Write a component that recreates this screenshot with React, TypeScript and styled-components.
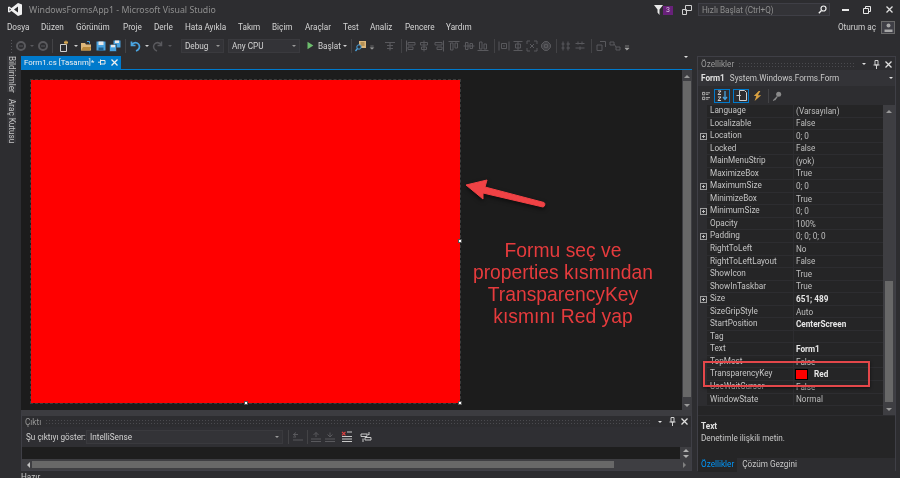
import React from "react";
import styled, { createGlobalStyle } from "styled-components";

const Global = createGlobalStyle`
  html, body { margin: 0; padding: 0; background: #2d2d30; overflow: hidden; }
  #root { width: 900px; height: 478px; }
  * { box-sizing: border-box; }
`;

const Root = styled.div`
  position: relative;
  width: 900px;
  height: 478px;
  overflow: hidden;
  display: flex;
  flex-direction: column;
  background: #2d2d30;
  color: #d0d0d0;
  font-family: Roboto, "Noto Sans", sans-serif;
  font-size: 8.2px;
  filter: blur(0.35px);
  & > * { flex-shrink: 0; }
`;

/* ---------- title bar ---------- */
const TitleBar = styled.div`
  height: 19px;
  display: flex;
  align-items: center;
  padding-left: 8px;
`;
const TitleText = styled.span`
  margin-left: 7px;
  color: #8f8f8f;
  font-family: "Noto Sans", sans-serif;
  font-size: 8.8px;
  flex: 1;
`;
const TitleIconSlot = styled.span<{ $w: number }>`
  width: ${(p) => p.$w}px;
  height: 16px;
  display: flex;
  align-items: center;
  justify-content: center;
  flex: none;
`;
const Badge = styled.span`
  width: 10px;
  height: 9px;
  margin-top: 2px;
  margin-right: 9px;
  background: #68217a;
  color: #d8c8e0;
  font-size: 7px;
  line-height: 9px;
  text-align: center;
  flex: none;
`;
const SearchBox = styled.div`
  width: 132px;
  height: 13px;
  margin-left: 6px;
  margin-right: 4px;
  border: 1px solid #3f3f46;
  background: #333337;
  display: flex;
  align-items: center;
  justify-content: space-between;
  padding: 0 2px 0 3px;
  color: #8f8f8f;
  font-size: 8.2px;
`;

/* ---------- menu ---------- */
const MenuBar = styled.div`
  height: 16px;
  display: flex;
  align-items: center;
  padding-left: 7px;
`;
const MenuItem = styled.span<{ $w: number }>`
  width: ${(p) => p.$w}px;
  flex: none;
  color: #d4d4d4;
  white-space: nowrap;
`;
const Account = styled.div`
  margin-left: auto;
  margin-right: 5px;
  display: flex;
  align-items: center;
  gap: 5px;
  color: #d0d0d0;
`;
const Avatar = styled.span`
  width: 14px;
  height: 13px;
  border: 1px solid #6a6a6a;
  background: #3f3f46;
  display: flex;
  align-items: center;
  justify-content: center;
`;

/* ---------- toolbar ---------- */
const ToolBar = styled.div`
  height: 21px;
  display: flex;
  align-items: center;
  padding-left: 8px;
`;
const Slot = styled.span<{ $w: number }>`
  width: ${(p) => p.$w}px;
  flex: none;
  display: flex;
  align-items: center;
  justify-content: center;
`;
const SlotEnd = styled(Slot)`
  margin-left: auto;
`;
const Sep = styled.i`
  width: 1px;
  height: 14px;
  background: #434346;
  display: block;
`;
const Grip = styled.i`
  width: 3px;
  height: 14px;
  background-image: radial-gradient(#55555a 0.6px, transparent 0.7px);
  background-size: 3px 3px;
  display: block;
`;
const Caret = styled.i<{ $c?: string }>`
  display: block;
  width: 0;
  height: 0;
  border-left: 2.5px solid transparent;
  border-right: 2.5px solid transparent;
  border-top: 2.5px solid ${(p) => p.$c || "#d0d0d0"};
`;
const Combo = styled.div<{ $w: number }>`
  width: ${(p) => p.$w}px;
  height: 14px;
  flex: none;
  background: #333337;
  border: 1px solid #3a3a3e;
  display: flex;
  align-items: center;
  justify-content: space-between;
  padding: 0 3px;
  color: #d4d4d4;
`;
const Label = styled.span<{ $w: number }>`
  width: ${(p) => p.$w}px;
  flex: none;
  color: #d4d4d4;
  padding-left: 3px;
  white-space: nowrap;
`;

/* ---------- main ---------- */
const Main = styled.div`
  height: 415px;
  display: flex;
`;
const SideStrip = styled.div`
  width: 21px;
  flex: none;
  padding-left: 7px;
  display: flex;
  flex-direction: column;
  gap: 7px;
`;
const SideTab = styled.div<{ $h: number }>`
  width: 9px;
  height: ${(p) => p.$h}px;
  background: #37373b;
  writing-mode: vertical-rl;
  color: #c4c4c4;
  font-size: 8.2px;
  line-height: 9px;
  white-space: nowrap;
`;
const Center = styled.div`
  width: 671px;
  flex: none;
  display: flex;
  flex-direction: column;
`;
const DocTabs = styled.div`
  height: 14px;
  border-bottom: 1px solid #007acc;
  display: flex;
  align-items: flex-start;
  justify-content: space-between;
  padding-right: 2px;
`;
const DocTab = styled.div`
  width: 100px;
  height: 13px;
  background: #007acc;
  color: #f0f0f0;
  display: flex;
  align-items: center;
  padding-left: 3px;
  white-space: nowrap;
`;
const DocTitle = styled.span`
  width: 74px;
  flex: none;
  font-size: 7.8px;
`;
const Designer = styled.div`
  height: 340px;
  display: flex;
`;
const Surface = styled.div`
  flex: 1;
  background: #1c1c1c;
  padding: 10px 0 0 10px;
`;
const FormRect = styled.div`
  position: relative;
  width: 429px;
  height: 323px;
  background: #ff0000;
  outline: 1px dashed #3c3c3c;
`;
const Handle = styled.i<{ $x: number; $y: number }>`
  position: absolute;
  left: ${(p) => p.$x}px;
  top: ${(p) => p.$y}px;
  width: 4px;
  height: 4px;
  background: #fff;
  border: 1px solid #555;
  display: block;
`;
const VScroll = styled.div`
  width: 10px;
  flex: none;
  background: #3e3e42;
  display: flex;
  flex-direction: column;
  align-items: center;
  padding: 5px 0 3px;
`;
const ArrowUp = styled.i<{ $c?: string }>`
  display: block;
  flex: none;
  width: 0;
  height: 0;
  border-left: 3px solid transparent;
  border-right: 3px solid transparent;
  border-bottom: 3px solid ${(p) => p.$c || "#999"};
`;
const ArrowDown = styled.i<{ $c?: string }>`
  display: block;
  flex: none;
  width: 0;
  height: 0;
  border-left: 3px solid transparent;
  border-right: 3px solid transparent;
  border-top: 3px solid ${(p) => p.$c || "#999"};
`;
const VThumb = styled.div<{ $top: number; $h: number }>`
  width: 8px;
  height: ${(p) => p.$h}px;
  margin-top: ${(p) => p.$top}px;
  margin-bottom: auto;
  background: #686868;
`;
const Output = styled.div`
  height: 61px;
  background: #2d2d30;
  border-top: 6px solid #3c3c40;
  border-right: 1px solid #3f3f46;
  border-left: 1px solid #3f3f46;
  border-bottom: 1px solid #3f3f46;
  display: flex;
  flex-direction: column;
`;
const PanelHead = styled.div`
  height: 11px;
  flex: none;
  display: flex;
  align-items: center;
  padding: 0 3px;
  color: #9a9a9a;
  gap: 4px;
  font-size: 8.2px;
`;
const PropsHead = styled(PanelHead)`
  height: 13px;
  padding-top: 1px;
`;
const Dots = styled.i`
  flex: 1;
  height: 5px;
  display: block;
  background-image: radial-gradient(#4a4a4e 0.6px, transparent 0.7px);
  background-size: 3px 3px;
`;
const OutTools = styled.div`
  height: 20px;
  flex: none;
  display: flex;
  align-items: center;
  padding-left: 4px;
  background: #2f2f33;
`;
const OutLabel = styled.span`
  width: 60px;
  flex: none;
  color: #d0d0d0;
  white-space: nowrap;
`;
const OutText = styled.div`
  height: 12px;
  flex: none;
  display: flex;
`;
const OutBody = styled.div`
  flex: 1;
  background: #1e1e1e;
`;
const OutSideBtns = styled.div`
  width: 11px;
  flex: none;
  background: #3e3e42;
  display: flex;
  flex-direction: column;
  align-items: center;
  justify-content: center;
  gap: 3px;
`;
const HScroll = styled.div`
  flex: 1;
  background: #3e3e42;
  display: flex;
  align-items: center;
  padding: 0 5px;
`;
const ArrowLeft = styled.i<{ $c: string }>`
  display: block;
  width: 0;
  height: 0;
  border-top: 3px solid transparent;
  border-bottom: 3px solid transparent;
  border-right: 3px solid ${(p) => p.$c};
  flex: none;
`;
const ArrowRight = styled.i<{ $c: string }>`
  display: block;
  width: 0;
  height: 0;
  border-top: 3px solid transparent;
  border-bottom: 3px solid transparent;
  border-left: 3px solid ${(p) => p.$c};
  flex: none;
`;
const HThumb = styled.div`
  width: 582px;
  height: 7px;
  margin-left: 2px;
  margin-right: auto;
  background: #686868;
  flex: none;
`;

/* ---------- properties ---------- */
const Props = styled.div`
  width: 199px;
  flex: none;
  margin-left: 5px;
  border: 1px solid #3f3f46;
  border-bottom: none;
  display: flex;
  flex-direction: column;
`;
const ObjectLine = styled.div`
  height: 16px;
  flex: none;
  display: flex;
  align-items: center;
  padding: 0 2px 0 3px;
  background: #333337;
  gap: 5px;
  color: #c8c8c8;
  white-space: nowrap;
`;
const Strong = styled.b`
  font-weight: 700;
  color: #e0e0e0;
`;
const PropTools = styled.div`
  height: 19px;
  flex: none;
  display: flex;
  align-items: center;
  padding-left: 3px;
`;
const ToolBtn = styled.span<{ $w: number; $on?: boolean }>`
  width: ${(p) => p.$w}px;
  height: 14px;
  flex: none;
  display: flex;
  align-items: center;
  justify-content: center;
  border: 1px solid ${(p) => (p.$on ? "#007acc" : "transparent")};
  margin-right: 3px;
`;
const GridArea = styled.div`
  height: 310px;
  flex: none;
  display: flex;
  background: #252526;
`;
const Rows = styled.div`
  flex: 1;
`;
const Row = styled.div`
  height: 12.55px;
  display: grid;
  grid-template-columns: 9px 87px 1fr;
  align-items: center;
  border-bottom: 1px solid #2d2d30;
  white-space: nowrap;
  line-height: 11px;
`;
const Gutter = styled.span`
  height: 12.5px;
  background: #2d2d30;
  display: flex;
  align-items: center;
  justify-content: center;
  padding-left: 2px;
`;
const Expander = styled.i`
  display: block;
  position: relative;
  width: 7px;
  height: 7px;
  border: 1px solid #a0a0a0;
  &::before {
    content: "";
    position: absolute;
    left: 1px;
    top: 2px;
    width: 3px;
    height: 1px;
    background: #c0c0c0;
  }
  &::after {
    content: "";
    position: absolute;
    left: 2px;
    top: 1px;
    width: 1px;
    height: 3px;
    background: #c0c0c0;
  }
`;
const PropName = styled.span`
  padding-left: 3px;
  color: #c4c4c4;
  height: 12.5px;
  border-right: 1px solid #2d2d30;
`;
const PropValue = styled.span<{ $b?: boolean }>`
  padding-left: 2px;
  color: ${(p) => (p.$b ? "#e6e6e6" : "#bdbdbd")};
  font-weight: ${(p) => (p.$b ? 700 : 400)};
  display: flex;
  align-items: center;
  gap: 6px;
  height: 12.5px;
`;
const Swatch = styled.i`
  width: 13px;
  height: 11px;
  background: #ff0000;
  border: 1px solid #000;
  display: block;
  flex: none;
  margin-left: -1px;
`;
const GridScroll = styled.div`
  width: 12px;
  flex: none;
  background: #3e3e42;
  display: flex;
  flex-direction: column;
  align-items: center;
  padding: 5px 0 4px;
`;
const Desc = styled.div`
  height: 42px;
  flex: none;
  margin-top: 1px;
  background: #252526;
  padding: 4px 3px 0;
  line-height: 12px;
  color: #c8c8c8;
`;
const TabRow = styled.div`
  height: 14px;
  flex: none;
  display: flex;
  align-items: center;
`;
const BottomTab = styled.span<{ $on?: boolean }>`
  height: 14px;
  line-height: 13px;
  padding: 0 3px;
  margin-right: ${(p) => (p.$on ? "2px" : 0)};
  background: ${(p) => (p.$on ? "#252526" : "transparent")};
  color: ${(p) => (p.$on ? "#0097fb" : "#c8c8c8")};
  white-space: nowrap;
`;
const StatusBar = styled.div`
  height: 7px;
  overflow: hidden;
  line-height: 12px;
  padding-left: 21px;
  color: #c8c8c8;
`;

/* ---------- annotations lying over the screenshot ---------- */
const Note = styled.div`
  position: absolute;
  left: 463px;
  top: 240px;
  width: 200px;
  text-align: center;
  font-family: "Liberation Sans", Arial, sans-serif;
  font-size: 19.3px;
  line-height: 21.9px;
  color: #e63b3d;
`;
const ArrowArt = styled.svg`
  position: absolute;
  left: 460px;
  top: 175px;
  filter: drop-shadow(0 2px 2px rgba(0, 0, 0, 0.55));
`;
const Highlight = styled.div`
  position: absolute;
  left: 703px;
  top: 361px;
  width: 167px;
  height: 26px;
  border: 2px solid #e4474a;
  box-shadow: 0 1px 3px rgba(0, 0, 0, 0.6);
`;

/* ---------- icons ---------- */
type IconName =
  | "circleL" | "circleR" | "newp" | "open" | "save" | "saveall" | "undo" | "redo" | "play" | "find" | "over"
  | "tab" | "aL" | "aC" | "aR" | "aT" | "aM" | "aB" | "wEq" | "hEq" | "bEq" | "cen" | "hs" | "vs" | "front" | "back"
  | "o1" | "o2" | "o3" | "o4" | "o5";

const D = "#59595d";
const ICONS: Record<IconName, React.ReactNode> = {
  circleL: <><circle cx="6" cy="6" r="4" fill="none" stroke={D} strokeWidth="2" /><path d="M4 6h4" stroke={D} /></>,
  circleR: <><circle cx="6" cy="6" r="4" fill="none" stroke={D} strokeWidth="2" /><path d="M4 6h4" stroke={D} /></>,
  newp: <><path d="M2.500 4.500h6v7h-6z" fill="none" stroke="#d0d0d0" /><path d="M8 .5v4M6 2.500h4M6.500 1l3 3M9.500 1l-3 3" stroke="#d8a850" /></>,
  open: <><path d="M1 3h4l1 1.500h5v6H1z" fill="#dcb67a" /><path d="M3 7h8l-1 3.500H1z" fill="#b88a3e" /><path d="M7 1.500l2.500 0v2" stroke="#4aa3df" fill="none" /></>,
  save: <><path d="M1.500 1.500h9v9h-9z" fill="#4aa3df" /><path d="M3.500 1.500h5v3.500h-5z" fill="#e8e8e8" /><path d="M3.500 7.500h5v3h-5z" fill="#1f5e8c" /></>,
  saveall: <><path d="M4.500 .5h7v7h-7z" fill="#4aa3df" /><path d="M6 .5h4v2.500H6z" fill="#e8e8e8" /><path d="M.5 4.500h7v7h-7z" fill="#4aa3df" stroke="#2d2d30" strokeWidth=".6" /><path d="M2 4.800h4v2.500H2z" fill="#e8e8e8" /></>,
  undo: <path d="M2.500 1.500v4h4M2.800 5.200C4 3 6 2.200 8 3c2.300 1 3 3.500 2 5.500-.5 1-1.500 2-3 2.500" fill="none" stroke="#4aa3df" strokeWidth="1.700" />,
  redo: <path d="M9.500 1.500v4h-4M9.200 5.200C8 3 6 2.200 4 3 1.700 4 1 6.500 2 8.500c.5 1 1.500 2 3 2.500" fill="none" stroke={D} strokeWidth="1.500" />,
  play: <path d="M3 1.500l7 4.500-7 4.500z" fill="#6dbd6d" />,
  find: <><path d="M4 1h7v7H4z" fill="#dcb67a" /><path d="M5.500 3h4M5.500 5h4" stroke="#8a6a30" /><circle cx="4" cy="7" r="2.200" fill="#2d2d30" stroke="#4aa3df" /><path d="M2.500 8.500L.5 11" stroke="#4aa3df" strokeWidth="1.300" /></>,
  over: <path d="M3.500 6h5M3.500 8.500h5L6 11z" stroke="#a0a0a0" fill="#a0a0a0" strokeWidth=".8" />,
  tab: <path d="M1 2.500h10M6 2.500v8M3 5.500h6M3 8.500h6" stroke={D} strokeWidth="1.200" fill="none" />,
  aL: <path d="M1.500 .5v11M3 2.500h7v2.500H3zM3 7h5v2.500H3z" stroke={D} fill="none" />,
  aC: <path d="M6 .5v11M2.500 2.500h7v2.500h-7zM3.500 7h5v2.500h-5z" stroke={D} fill="none" />,
  aR: <path d="M10.500 .5v11M2 2.500h7v2.500H2zM4 7h5v2.500H4z" stroke={D} fill="none" />,
  aT: <path d="M.5 1.500h11M2.500 3v7h2.500V3zM7 3v5h2.500V3z" stroke={D} fill="none" />,
  aM: <path d="M.5 6h11M2.500 2.500v7h2.500v-7zM7 3.500v5h2.500v-5z" stroke={D} fill="none" />,
  aB: <path d="M.5 10.500h11M2.500 2v7h2.500V2zM7 4v5h2.500V4z" stroke={D} fill="none" />,
  wEq: <path d="M1 1.500v9M11 1.500v9M3.500 3.500h5v5h-5zM5 6h2" stroke={D} fill="none" />,
  hEq: <path d="M1.500 1.500h9M1.500 10.500h9M6 1.500v9M3.500 4h5v4h-5z" stroke={D} fill="none" />,
  bEq: <path d="M1 1h3M1 1v3M11 1H8M11 1v3M1 11h3M1 11V8M11 11H8M11 11V8M4 4l4 4M8 4L4 8" stroke={D} fill="none" />,
  cen: <path d="M1.500 4.500l3-3h3l3 3v3l-3 3h-3l-3-3zM4.500 4.500h3v3h-3z" stroke={D} fill={D} fillOpacity=".5" />,
  hs: <path d="M3 1.500v9M8 1.500v9M1.500 4h3M6.500 4H10M1.500 8h3M6.500 8H10" stroke={D} fill="none" />,
  vs: <path d="M1.500 3.500h9M1.500 8h9M4 1.500v3M8 1.500v3M6 6.500V10" stroke={D} fill="none" />,
  front: <path d="M5 1.500h5.500V7M2 5h5v5.500H2z" stroke={D} fill="none" />,
  back: <path d="M1 2h4v3H1zM7 7h4v3H7zM5 4l2 3" stroke={D} fill="none" />,
  o1: <path d="M1 3.500h5M1 6h3M1 9h10M4 1.500L1.500 3.500 4 5.500" stroke={D} fill="none" />,
  o2: <path d="M1 8h10M1 10.500h10M6 6V1.500M3.500 4L6 1.500 8.500 4" stroke={D} fill="none" />,
  o3: <path d="M1 8h10M1 10.500h10M6 1.500V6M3.500 3.500L6 6l2.500-2.500" stroke={D} fill="none" />,
  o4: <><path d="M1 5.500h10M1 8h10M1 10.500h10M6 1h5" stroke="#c8c8c8" fill="none" /><path d="M1 .8l3.500 3.500M4.500 .8L1 4.300" stroke="#e04040" strokeWidth="1.200" /></>,
  o5: <path d="M1 3h6v2.500H1zM5 6.500h6V9H5zM9 1v3M9 4L7.500 3M3 11V7.500" stroke="#c8c8c8" fill="none" />,
};
const Icon = ({ n, s = 12 }: { n: IconName; s?: number }) => (
  <svg width={s} height={s} viewBox="0 0 12 12">{ICONS[n]}</svg>
);

const PinIcon = ({ c = "#d0d0d0" }: { c?: string }) => (
  <svg width="7" height="9" viewBox="0 0 7 9"><path d="M2 .5h3v4.500h-3zM.5 5h6M3.500 5v4" stroke={c} fill="none" /></svg>
);
const PinFlat = () => (
  <svg width="8" height="7" viewBox="0 0 8 7"><path d="M2.500 1.500h4.500v3.500H2.500zM2.500 3.200H0M2.500 .5v5.500" stroke="#e8e8e8" fill="none" /></svg>
);
const CloseX = ({ c = "#e0e0e0" }: { c?: string }) => (
  <svg width="7" height="7" viewBox="0 0 7 7"><path d="M.5.5l6 6M6.500.5l-6 6" stroke={c} strokeWidth="1.300" /></svg>
);

/* ---------- data ---------- */
const MENU: [string, number][] = [
  ["Dosya", 34], ["Düzen", 35], ["Görünüm", 47], ["Proje", 31], ["Derle", 31], ["Hata Ayıkla", 53],
  ["Takım", 34], ["Biçim", 33], ["Araçlar", 38], ["Test", 27], ["Analiz", 35], ["Pencere", 41], ["Yardım", 40],
];

type Tool = { w: number; i?: IconName; k?: "sep" | "caret" | "dimcaret" | "grip" | "none" };
const TOOLS_A: Tool[] = [
  { w: 6, k: "grip" }, { w: 14, i: "circleL" }, { w: 8, k: "dimcaret" }, { w: 14, i: "circleR" }, { w: 4, k: "sep" },
  { w: 20, i: "newp" }, { w: 4, k: "caret" }, { w: 16, i: "open" }, { w: 14, i: "save" }, { w: 14, i: "saveall" },
  { w: 6, k: "sep" }, { w: 14, i: "undo" }, { w: 10, k: "caret" }, { w: 12, i: "redo" }, { w: 12, k: "dimcaret" }, { w: 5, k: "none" },
];
const TOOLS_B: Tool[] = [
  { w: 6, k: "caret" }, { w: 6, k: "sep" }, { w: 14, i: "find" }, { w: 8, i: "over" }, { w: 7, k: "none" },
  { w: 14, i: "tab" }, { w: 8, k: "sep" }, { w: 12, i: "aL" }, { w: 14, i: "aC" }, { w: 16, i: "aR" },
  { w: 14, i: "aT" }, { w: 15, i: "aM" }, { w: 14, i: "aB" }, { w: 8, k: "sep" }, { w: 12, i: "wEq" },
  { w: 15, i: "hEq" }, { w: 14, i: "bEq" }, { w: 14, i: "cen" }, { w: 6, k: "sep" }, { w: 14, i: "hs" },
  { w: 14, i: "vs" }, { w: 8, k: "sep" }, { w: 12, i: "front" }, { w: 15, i: "back" }, { w: 10, i: "over" },
];
const renderTool = (t: Tool, key: number) => (
  <Slot key={key} $w={t.w}>
    {t.i && <Icon n={t.i} />}
    {t.k === "sep" && <Sep />}
    {t.k === "grip" && <Grip />}
    {t.k === "caret" && <Caret />}
    {t.k === "dimcaret" && <Caret $c="#59595d" />}
  </Slot>
);

type P = { n: string; v?: string; e?: boolean; b?: boolean; sw?: boolean };
const PROPS: P[] = [
  { n: "Language", v: "(Varsayılan)" }, { n: "Localizable", v: "False" }, { n: "Location", v: "0; 0", e: true },
  { n: "Locked", v: "False" }, { n: "MainMenuStrip", v: "(yok)" }, { n: "MaximizeBox", v: "True" },
  { n: "MaximumSize", v: "0; 0", e: true }, { n: "MinimizeBox", v: "True" }, { n: "MinimumSize", v: "0; 0", e: true },
  { n: "Opacity", v: "100%" }, { n: "Padding", v: "0; 0; 0; 0", e: true }, { n: "RightToLeft", v: "No" },
  { n: "RightToLeftLayout", v: "False" }, { n: "ShowIcon", v: "True" }, { n: "ShowInTaskbar", v: "True" },
  { n: "Size", v: "651; 489", e: true, b: true }, { n: "SizeGripStyle", v: "Auto" },
  { n: "StartPosition", v: "CenterScreen", b: true }, { n: "Tag", v: "" }, { n: "Text", v: "Form1", b: true },
  { n: "TopMost", v: "False" }, { n: "TransparencyKey", v: "Red", b: true, sw: true },
  { n: "UseWaitCursor", v: "False" }, { n: "WindowState", v: "Normal" },
];

const OUT_TOOLS: [IconName, number][] = [["o2", 15], ["o3", 14], ["o4", 20], ["o5", 18]];

export default function App() {
  return (
    <Root>
      <Global />
      <TitleBar>
        <svg width="14" height="13" viewBox="0 0 14 13">
          <path d="M10 0l4 1.600v9.800L10 13 3.500 8 1.200 9.600 0 9V4l1.200-.6L3.500 5z" fill="#f0f0f0" />
          <path d="M10 3.500L6 6.500l4 3zM1.500 5v3L3 6.500z" fill="#2d2d30" />
        </svg>
        <TitleText>WindowsFormsApp1 - Microsoft Visual Studio</TitleText>
        <TitleIconSlot $w={9}>
          <svg width="9" height="10" viewBox="0 0 9 10"><path d="M0 0h9L5.500 4.500V10L3.500 7.500v-3z" fill="#e8e8e8" /></svg>
        </TitleIconSlot>
        <Badge>3</Badge>
        <TitleIconSlot $w={10}>
          <svg width="10" height="10" viewBox="0 0 10 10"><path d="M3.500.5h6v5h-6zM.5 4.500h4v5h-4z" fill="#2d2d30" stroke="#d0d0d0" /></svg>
        </TitleIconSlot>
        <SearchBox>
          Hızlı Başlat (Ctrl+Q)
          <svg width="9" height="9" viewBox="0 0 9 9"><circle cx="5.500" cy="3.500" r="2.500" fill="none" stroke="#f0f0f0" strokeWidth="1.200" /><path d="M3.500 5.500L.8 8.200" stroke="#f0f0f0" strokeWidth="1.400" /></svg>
        </SearchBox>
        <TitleIconSlot $w={22}>
          <svg width="7" height="2" viewBox="0 0 7 2"><path d="M0 1h7" stroke="#e8e8e8" strokeWidth="2" /></svg>
        </TitleIconSlot>
        <TitleIconSlot $w={22}>
          <svg width="8" height="8" viewBox="0 0 8 8"><path d="M2.500 2V.5h5v5H6M.5 2.500h5v5h-5z" fill="none" stroke="#e8e8e8" /></svg>
        </TitleIconSlot>
        <TitleIconSlot $w={22}>
          <CloseX />
        </TitleIconSlot>
      </TitleBar>

      <MenuBar>
        {MENU.map(([m, w]) => <MenuItem key={m} $w={w}>{m}</MenuItem>)}
        <Account>
          Oturum aç
          <Avatar>
            <svg width="9" height="9" viewBox="0 0 9 9"><circle cx="4.500" cy="2.500" r="2" fill="#a8a8a8" /><path d="M.5 9V6.500h8V9z" fill="#a8a8a8" /></svg>
          </Avatar>
        </Account>
      </MenuBar>

      <ToolBar>
        {TOOLS_A.map(renderTool)}
        <Combo $w={43}>Debug<Caret $c="#999" /></Combo>
        <Slot $w={4} />
        <Combo $w={72}>Any CPU<Caret $c="#999" /></Combo>
        <Slot $w={5} />
        <Slot $w={10}><Icon n="play" s={11} /></Slot>
        <Label $w={27}>Başlat</Label>
        {TOOLS_B.map(renderTool)}
      </ToolBar>

      <Main>
        <SideStrip>
          <SideTab $h={36}>Bildirimler</SideTab>
          <SideTab $h={44}>Araç Kutusu</SideTab>
        </SideStrip>

        <Center>
          <DocTabs>
            <DocTab>
              <DocTitle>Form1.cs [Tasarım]*</DocTitle>
              <Slot $w={8}><PinFlat /></Slot>
              <Slot $w={16}><CloseX c="#f0f0f0" /></Slot>
            </DocTab>
            <Slot $w={8}><Caret $c="#e0e0e0" /></Slot>
          </DocTabs>
          <Designer>
            <Surface>
              <FormRect>
                <Handle $x={213} $y={321} />
                <Handle $x={427} $y={159} />
                <Handle $x={427} $y={321} />
              </FormRect>
            </Surface>
            <VScroll>
              <ArrowUp />
              <VThumb $top={3} $h={316} />
              <ArrowDown />
            </VScroll>
          </Designer>
          <Output>
            <PanelHead>
              Çıktı
              <Dots />
              <Slot $w={8}><Caret $c="#e0e0e0" /></Slot>
              <Slot $w={8}><PinIcon /></Slot>
              <Slot $w={8}><CloseX /></Slot>
            </PanelHead>
            <OutTools>
              <OutLabel>Şu çıktıyı göster:</OutLabel>
              <Combo $w={197}>IntelliSense<Caret $c="#999" /></Combo>
              <Slot $w={5} />
              <Slot $w={1}><Sep /></Slot>
              <Slot $w={18}><Icon n="o1" /></Slot>
              <Slot $w={1}><Sep /></Slot>
              {OUT_TOOLS.map(([n, w]) => <Slot key={n} $w={w}><Icon n={n} /></Slot>)}
            </OutTools>
            <OutText>
              <OutBody />
              <OutSideBtns>
                <ArrowUp $c="#b0b0b0" />
                <ArrowDown $c="#b0b0b0" />
              </OutSideBtns>
            </OutText>
            <HScroll>
              <ArrowLeft $c="#c0c0c0" />
              <HThumb />
              <ArrowRight $c="#808080" />
            </HScroll>
          </Output>
        </Center>

        <Props>
          <PropsHead>
            Özellikler
            <Dots />
            <Slot $w={8}><Caret $c="#e0e0e0" /></Slot>
            <Slot $w={8}><PinIcon /></Slot>
            <Slot $w={8}><CloseX /></Slot>
          </PropsHead>
          <ObjectLine>
            <Strong>Form1</Strong>
            System.Windows.Forms.Form
            <SlotEnd $w={5}><Caret $c="#e0e0e0" /></SlotEnd>
          </ObjectLine>
          <PropTools>
            <ToolBtn $w={10}>
              <svg width="10" height="10" viewBox="0 0 10 10"><path d="M.5.5h3v3h-3zM.5 6.500h3v3h-3zM5 1h5M5 3h3M5 7h5M5 9h3" stroke="#c8c8c8" fill="none" /></svg>
            </ToolBtn>
            <ToolBtn $w={16} $on>
              <svg width="11" height="11" viewBox="0 0 11 11"><path d="M1 1h3L1 4.500h3M1 7h3L1 10.500h3" stroke="#d0d0d0" fill="none" /><path d="M8 1v8M6 7l2 2.500L10 7" stroke="#4aa3df" strokeWidth="1.300" fill="none" /></svg>
            </ToolBtn>
            <ToolBtn $w={16} $on>
              <svg width="11" height="11" viewBox="0 0 11 11"><path d="M3.500.5h5l2 2v8h-7z" fill="none" stroke="#d0d0d0" /><path d="M.5 5.500h4M3 4l1.500 1.500L3 7" stroke="#d0d0d0" fill="none" /></svg>
            </ToolBtn>
            <ToolBtn $w={11}>
              <svg width="11" height="12" viewBox="0 0 11 12"><path d="M7 0L1 6h3l-2 6 8-7H6l3-5z" fill="#d8a040" /></svg>
            </ToolBtn>
            <Slot $w={5}><Sep /></Slot>
            <ToolBtn $w={12}>
              <svg width="12" height="12" viewBox="0 0 12 12"><circle cx="8" cy="4" r="3" fill="#8a8a8a" /><path d="M6 6L1 11l1 1 1-1 1 0 3-4" fill="#8a8a8a" /></svg>
            </ToolBtn>
          </PropTools>
          <GridArea>
            <Rows>
              {PROPS.map((p) => (
                <Row key={p.n}>
                  <Gutter>{p.e && <Expander />}</Gutter>
                  <PropName>{p.n}</PropName>
                  <PropValue $b={p.b}>
                    {p.sw && <Swatch />}
                    {p.v}
                  </PropValue>
                </Row>
              ))}
            </Rows>
            <GridScroll>
              <ArrowUp />
              <VThumb $top={168} $h={121} />
              <ArrowDown />
            </GridScroll>
          </GridArea>
          <Desc>
            <Strong>Text</Strong>
            <div>Denetimle ilişkili metin.</div>
          </Desc>
          <TabRow>
            <BottomTab $on>Özellikler</BottomTab>
            <BottomTab>Çözüm Gezgini</BottomTab>
          </TabRow>
        </Props>
      </Main>
      <StatusBar>Hazır</StatusBar>

      <ArrowArt width="90" height="40" viewBox="0 0 90 40">
        <path d="M6 10L27 5 25 12 84 27.500c1.500 1 1 4-1 4.500L23 18 23 24z" fill="#f04245" stroke="#f04245" strokeWidth="1" strokeLinejoin="round" />
      </ArrowArt>
      <Note>
        Formu seç ve<br />
        properties kısmından<br />
        TransparencyKey<br />
        kısmını Red yap
      </Note>
      <Highlight />
    </Root>
  );
}
